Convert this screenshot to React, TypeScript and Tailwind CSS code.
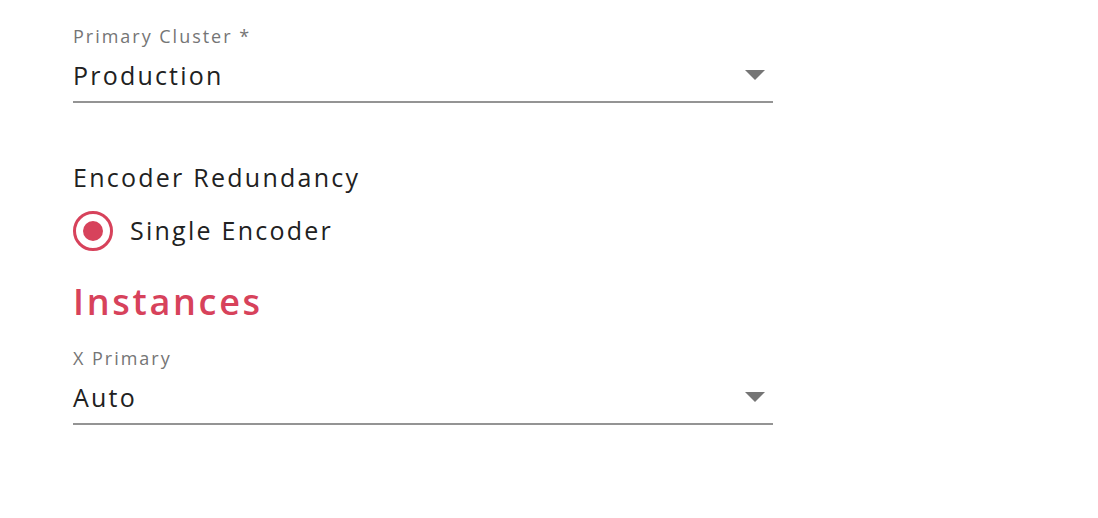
import { useState } from "react";

const Caret = () => (
  <svg width="20" height="10" viewBox="0 0 20 10" className="shrink-0">
    <path d="M0 0 L20 0 L10 10 Z" fill="#757575" />
  </svg>
);

const SelectField = ({ label, value, className }: { label: string; value: string; className?: string }) => (
  <div className={`w-[700px] ${className ?? ""}`}>
    <div className="text-[18px] leading-[22px] tracking-[0.11em] text-[#757575]">{label}</div>
    <div className="mt-[12px] flex h-[32px] items-center justify-between pr-[8px]">
      <span className="text-[25px] leading-[32px] tracking-[0.088em] text-[#212121]">{value}</span>
      <Caret />
    </div>
    <div className="mt-[10px] h-[2px] bg-[#949494]" />
  </div>
);

const App = () => {
  const [redundancy, setRedundancy] = useState("single");

  return (
    <div className="h-[518px] w-full bg-white pl-[73px] pt-[25px] font-['Open_Sans',sans-serif]">
      <SelectField label="Primary Cluster *" value="Production" />

      <div className="mt-[58px] text-[25px] leading-[32px] tracking-[0.09em] text-[#212121]">
        Encoder Redundancy
      </div>

      <label className="mt-[18px] flex h-[40px] items-center gap-[17px]">
        <button
          onClick={() => setRedundancy("single")}
          className="flex h-[40px] w-[40px] items-center justify-center rounded-full border-[3px] border-[#d7425b]"
        >
          {redundancy === "single" && <span className="h-[20px] w-[20px] rounded-full bg-[#d7425b]" />}
        </button>
        <span className="-mt-[2px] text-[25px] leading-[32px] tracking-[0.09em] text-[#212121]">Single Encoder</span>
      </label>

      <h2 className="mt-[29px] text-[36px] font-semibold leading-[44px] tracking-[0.075em] text-[#d7425b]">
        Instances
      </h2>

      <SelectField label="X Primary" value="Auto" className="mt-[23px]" />
    </div>
  );
};

export default App;
